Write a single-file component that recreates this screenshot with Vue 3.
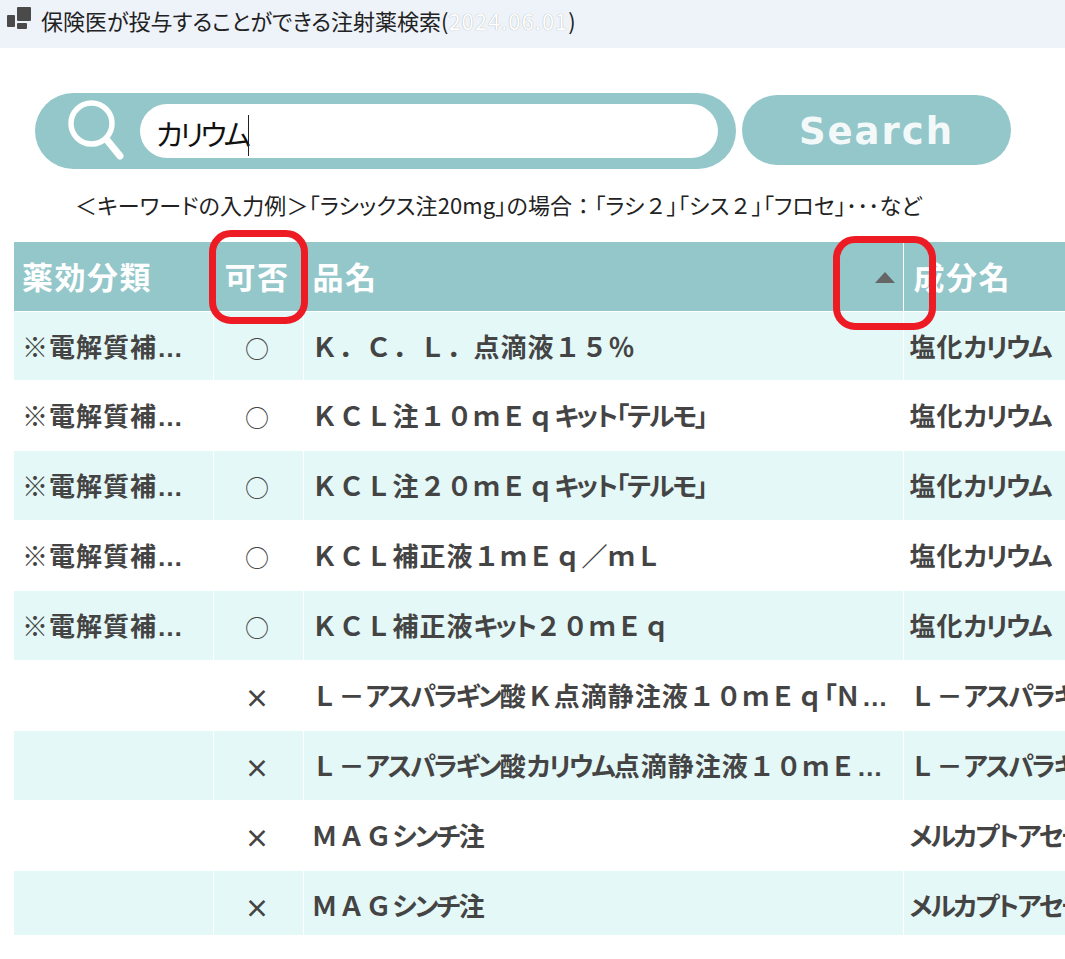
<template>
  <div class="page">
    <header class="title">
      <svg class="title-icon" width="26" height="24" viewBox="0 0 26 24">
        <rect x="10" y="0" width="14" height="14" rx="1" fill="#4a4a4a" />
        <rect x="0" y="8" width="8" height="12" rx="1" fill="#4a4a4a" />
        <rect x="10" y="16" width="10" height="6" rx="1" fill="#4a4a4a" />
      </svg>
      <span>保険医が投与することができる注射薬検索(<span class="blur">2024.06.01</span>)</span>
    </header>

    <div class="search">
      <div class="bar">
        <svg class="glass" width="62" height="64" viewBox="0 0 62 64">
          <circle cx="27.5" cy="25.5" r="20.5" fill="none" stroke="#fff" stroke-width="5.5" />
          <line x1="43" y1="42" x2="56" y2="58" stroke="#fff" stroke-width="7" stroke-linecap="round" />
        </svg>
        <div class="input">カリウム<i class="caret"></i></div>
      </div>
      <button class="btn">Search</button>
    </div>

    <p class="hint">
      <span v-for="(part, i) of parts(hint)" :key="i" :class="{ kana: i % 2 }">{{ part }}</span>
    </p>

    <div class="table-wrap">
      <table>
        <thead>
          <tr>
            <th class="c1">薬効分類</th>
            <th class="c2">可否</th>
            <th class="c3">品名<span class="sort"></span></th>
            <th class="c4">成分名</th>
          </tr>
        </thead>
        <tbody>
          <tr v-for="(row, index) of rows" :key="index">
            <td class="c1">{{ row.cat }}</td>
            <td class="c2" :class="{ ok: row.ok === '○' }">{{ row.ok }}</td>
            <td class="c3">
              <span v-for="(part, i) of parts(row.name)" :key="i" :class="{ kana: i % 2 }">{{ part }}</span>
            </td>
            <td class="c4">
              <span v-for="(part, i) of parts(row.comp)" :key="i" :class="{ kana: i % 2 }">{{ part }}</span>
            </td>
          </tr>
        </tbody>
      </table>
      <div class="mark mark-a"></div>
      <div class="mark mark-b"></div>
    </div>
  </div>
</template>

<script setup>
const hint = '＜キーワードの入力例＞「ラシックス注20mg」の場合：「ラシ２」「シス２」「フロセ」･･･など'

const cat = '※電解質補正製剤'
const kcl = '塩化カリウム'
const asp = 'Ｌ－アスパラギン酸カリウム'
const mag = 'メルカプトアセチルグリシン'

const rows = [
  { cat, ok: '○', name: 'Ｋ．Ｃ．Ｌ．点滴液１５％', comp: kcl },
  { cat, ok: '○', name: 'ＫＣＬ注１０ｍＥｑキット「テルモ」', comp: kcl },
  { cat, ok: '○', name: 'ＫＣＬ注２０ｍＥｑキット「テルモ」', comp: kcl },
  { cat, ok: '○', name: 'ＫＣＬ補正液１ｍＥｑ／ｍＬ', comp: kcl },
  { cat, ok: '○', name: 'ＫＣＬ補正液キット２０ｍＥｑ', comp: kcl },
  { cat: '', ok: '×', name: 'Ｌ－アスパラギン酸Ｋ点滴静注液１０ｍＥｑ「ＮＩＧ」', comp: asp },
  { cat: '', ok: '×', name: 'Ｌ－アスパラギン酸カリウム点滴静注液１０ｍＥｑ「日新」', comp: asp },
  { cat: '', ok: '×', name: 'ＭＡＧシンチ注', comp: mag },
  { cat: '', ok: '×', name: 'ＭＡＧシンチ注', comp: mag },
]

// kana and brackets are set narrow, full-width latin stays full width
const parts = (text) => text.split(/([ぁ-んァ-ヶー「」･]+)/)
</script>

<style>
html,
body {
  overflow: hidden;
  background: #fff;
}
</style>

<style scoped>
.page {
  width: 1065px;
  height: 959px;
  overflow: hidden;
  font-family: "Noto Sans CJK JP", "Liberation Sans", sans-serif;
  color: #222;
}
.kana {
  font-feature-settings: "palt";
}
.title {
  height: 48px;
  background: #eef3fa;
  display: flex;
  align-items: flex-start;
  padding-left: 7px;
  gap: 8px;
  font-size: 22px;
  line-height: 40px;
  font-feature-settings: "palt";
}
.title-icon {
  flex: none;
  margin-top: 7px;
}
.blur {
  color: #fff;
  letter-spacing: 1px;
  text-shadow: 0 0 1px #999;
}
.search {
  display: flex;
  margin: 45px 0 0 35px;
}
.bar {
  width: 701px;
  height: 76px;
  box-sizing: border-box;
  padding: 11px 18px 11px 29px;
  background: #93c7ca;
  border-radius: 38px;
  display: flex;
  gap: 14px;
}
.glass {
  flex: none;
  margin-top: -6px;
}
.input {
  flex: 1;
  height: 54px;
  background: #fff;
  border-radius: 27px;
  padding-left: 16px;
  font-size: 29px;
  line-height: 58px;
  letter-spacing: -3px;
  font-feature-settings: "palt";
  color: #111;
}
.caret {
  display: inline-block;
  width: 1px;
  height: 41px;
  background: #222;
  vertical-align: -10px;
}
.btn {
  width: 269px;
  height: 70px;
  margin: 2px 0 0 6px;
  border: none;
  border-radius: 35px;
  background: #93c7ca;
  color: #f3f9f9;
  font-family: "DejaVu Sans", sans-serif;
  font-size: 37px;
  font-weight: bold;
  letter-spacing: 2px;
  padding: 2px 0 0;
}
.hint {
  margin: 19px 0 0 75px;
  font-size: 22px;
  line-height: 32px;
  height: 32px;
  letter-spacing: 0.13px;
  white-space: nowrap;
  color: #222;
}
.table-wrap {
  position: relative;
  margin: 22px 0 0 14px;
}
table {
  table-layout: fixed;
  width: 1200px;
  border-collapse: collapse;
  font-family: "Liberation Sans", "Noto Sans CJK JP", sans-serif;
  color: #444;
  font-weight: bold;
}
.c1 {
  width: 199px;
  padding-left: 8px;
  padding-right: 17px;
}
.c2 {
  width: 90px;
}
.c3 {
  width: 600px;
  padding-left: 8px;
  padding-right: 14px;
}
.c4 {
  padding-left: 6px;
}
th,
td {
  box-sizing: border-box;
  overflow: hidden;
  white-space: nowrap;
  text-overflow: ellipsis;
  text-align: left;
  border-left: 1px solid #fff;
}
th:first-child,
td:first-child {
  border-left: none;
}
th {
  height: 69px;
  padding-bottom: 2px;
  background: #93c7ca;
  color: #fff;
  font-size: 31px;
  letter-spacing: 1.5px;
  border-bottom: 1px solid #fff;
  position: relative;
}
th.c3 {
  padding-left: 9px;
}
th.c4 {
  padding-left: 10px;
}
th.c2,
td.c2 {
  text-align: center;
  padding-right: 3px;
}
td {
  height: 69px;
  padding-top: 16px;
  padding-bottom: 0;
  vertical-align: top;
  font-size: 26px;
  line-height: 40px;
  letter-spacing: 1px;
}
td .kana {
  letter-spacing: -2px;
}
td.c2 {
  font-family: "Noto Sans CJK JP", sans-serif;
  font-size: 25px;
  letter-spacing: 0;
}
td.ok {
  font-size: 24px;
  font-weight: normal;
}
tbody tr:nth-child(even) td {
  height: 71px;
  padding-top: 17px;
}
tbody tr:nth-child(odd) td {
  background: #e4f8f7;
}
tbody tr:last-child td {
  height: 64px;
}
.sort {
  position: absolute;
  right: 8px;
  top: 30px;
  width: 0;
  height: 0;
  border-left: 10px solid transparent;
  border-right: 10px solid transparent;
  border-bottom: 11px solid #666;
}
.mark {
  position: absolute;
  box-sizing: border-box;
  border: 7px solid #ed1c24;
  border-radius: 22px;
}
.mark-a {
  left: 195px;
  top: -12px;
  width: 99px;
  height: 94px;
}
.mark-b {
  left: 819px;
  top: -6px;
  width: 103px;
  height: 94px;
}
</style>
